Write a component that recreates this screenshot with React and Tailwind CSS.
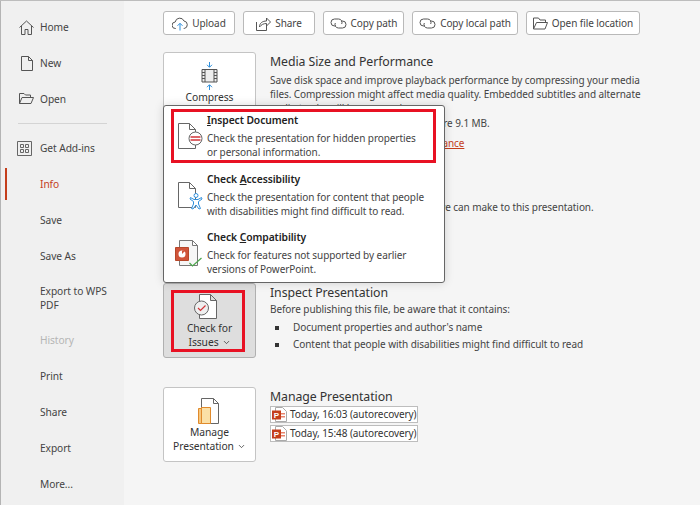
import { ChevronDown } from 'lucide-react';

const FONT = 'font-["Noto_Sans",sans-serif]';

function Glyph({ w = 18, h = 18, className = '', children }) {
  return (
    <svg width={w} height={h} viewBox={`0 0 ${w} ${h}`} fill="none" className={`shrink-0 ${className}`}>
      {children}
    </svg>
  );
}

const HomeIcon = () => (
  <Glyph w={15} h={15} className="ml-[2px]">
    <path d="M.5 7.5 7.5 1l7 6.5M2.5 6v8.5H6v-5h3v5h3.5V6" stroke="#555" />
  </Glyph>
);
const NewIcon = () => (
  <Glyph w={12} h={15} className="ml-[4px]">
    <path d="M.5.5h7l4 4v10H.5zM7.5.5v4h4" stroke="#555" />
  </Glyph>
);
const OpenIcon = () => (
  <Glyph w={15} h={11} className="ml-[2px] -mt-[2px]">
    <path d="M.5 10.5V.5H5L6.5 2h5v2.5M.5 10.5 3 4.5h11.5l-2.5 6z" stroke="#555" />
  </Glyph>
);
const AddinsIcon = () => (
  <Glyph w={15} h={15}>
    <path d="M.5.5h14v14H.5z" stroke="#666" />
    <path d="M3.5 3.5h3v3h-3zM8.5 3.5h3v3h-3zM3.5 8.5h3v3h-3zM8.5 8.5h3v3h-3z" stroke="#666" />
  </Glyph>
);

const UploadIcon = () => (
  <Glyph w={16} h={15}>
    <path d="M4 12.5h-.5A3.2 3.2 0 0 1 3.2 6 4.6 4.6 0 0 1 12 5a3.8 3.8 0 0 1 .2 7.5h-.5" stroke="#555" />
    <path d="M8 14.5V7.5M5.5 9.8 8 7.3l2.5 2.5" stroke="#2e8fdc" />
  </Glyph>
);
const ShareIcon = () => (
  <Glyph w={15} h={15}>
    <path d="M.5 6v8.5h10V10" stroke="#555" />
    <path d="M3.5 11c0-4 3-6 7-6V2l4 4-4 4V7.5c-3 0-5 1-7 3.5z" stroke="#555" />
  </Glyph>
);
const LinkIcon = () => (
  <Glyph w={17} h={13}>
    <path d="M6 9H4.5a3.5 3.5 0 0 1 0-7h4a3.5 3.5 0 0 1 3.2 5" stroke="#555" />
    <path d="M11 4h1.5a3.5 3.5 0 0 1 0 7h-4a3.5 3.5 0 0 1-3.2-5" stroke="#555" />
  </Glyph>
);
const FolderIcon = () => (
  <Glyph w={15} h={13}>
    <path d="M.5 12V1h5l1.5 2h5.5v2.5M.5 12l3-6.5h11L12 12z" stroke="#555" />
  </Glyph>
);

const CompressIcon = () => (
  <Glyph w={17} h={28}>
    <path d="M8.5 0v5M6 2.8l2.5 2.5L11 2.8M8.5 28v-5M6 25.2l2.5-2.5 2.5 2.5" stroke="#2e8fdc" />
    <path d="M1 7.5h15v12.5H1z" fill="#eee" stroke="#555" />
    <path d="M4 7.5V20M13 7.5V20M1 10.5h3M1 13.5h3M1 16.5h3M13 10.5h3M13 13.5h3M13 16.5h3" stroke="#555" />
  </Glyph>
);

const PageShape = () => (
  <path d="M.5.5h11l6 6v19H.5zM11.5.5v6h6" fill="#fff" stroke="#666" />
);
const InspectDocIcon = () => (
  <Glyph w={26} h={26}>
    <PageShape />
    <circle cx="17.5" cy="15.5" r="6.5" fill="#fff" stroke="#666" />
    <path d="M12.5 14h10M12.5 17h10" stroke="#d13438" strokeWidth="1.5" />
  </Glyph>
);
const AccessIcon = () => (
  <Glyph w={26} h={28}>
    <PageShape />
    <circle cx="18" cy="13.5" r="2" fill="#fff" stroke="#2e8fdc" />
    <path d="M12.5 15.5l3.5 2h4l3.5-2 .5 1.5-3.5 2.5v2.5l2 4.5-1.5.5-3-4-3 4-1.5-.5 2-4.5v-2.5L12 17z" fill="#fff" stroke="#2e8fdc" />
  </Glyph>
);
const CompatIcon = () => (
  <Glyph w={28} h={28} className="-ml-[3px]">
    <path d="M4.5.5h13l5 5v20h-18zM17.5.5v5h5" fill="#f6f6f6" stroke="#777" />
    <path d="M.5 7.5h13v13H.5z" fill="#d0543a" stroke="#b7472a" />
    <circle cx="7" cy="14" r="3.5" fill="#fff" />
    <path d="M7 14v-3.5h3.5z" fill="#d0543a" />
    <path d="M14.5 23l3 3 9-8" stroke="#4ca64c" strokeWidth="1.2" />
  </Glyph>
);
const CheckIssuesIcon = () => (
  <Glyph w={23} h={25} className="-ml-[8px]">
    <path d="M5.5.5h11l6 6v18h-17zM16.5.5v6h6" fill="#fff" stroke="#666" />
    <circle cx="7.5" cy="14" r="7" fill="#efefef" stroke="#666" />
    <path d="M4 14l2.5 2.5 5-5" stroke="#d13438" strokeWidth="1.2" />
  </Glyph>
);
const ManageIcon = () => (
  <Glyph w={21} h={26} className="-ml-[3px]">
    <path d="M3.5.5h12l5 5v20h-17zM15.5.5v5h5" fill="#fff" stroke="#666" />
    <path d="M.5 10.5h9v15h-9z" fill="#f6c77e" stroke="#e08a2c" />
    <path d="M3.5 9.5h9v16h-9z" fill="#fbe0a6" stroke="#e08a2c" />
  </Glyph>
);
const PptIcon = () => (
  <Glyph w={15} h={15}>
    <path d="M3.5.5h7l4 4v10h-11z" fill="#fff" stroke="#aaa" />
    <path d="M9 6h4v1.5H9zM9 9h4v1.5H9z" fill="#e7846d" />
    <path d="M0 3.5h9v9H0z" fill="#c43e1c" />
    <text x="4.5" y="11" textAnchor="middle" fontSize="8" fontWeight="700" fill="#fff" fontFamily="Liberation Sans">P</text>
  </Glyph>
);

function NavRow({ icon, active, muted, tall, children }) {
  return (
    <div className={`ml-[4px] my-[2px] flex items-center border-l-2 pl-[10px] ${tall ? 'h-[44px]' : 'h-[32px]'} ${active ? 'border-[#c43e1c] text-[#c43e1c]' : 'border-transparent'} ${muted ? 'text-[#b5b5b5]' : ''} ${!active && !muted ? 'text-[#444]' : ''}`}>
      <span className="flex w-[23px] shrink-0 items-center">{icon}</span>
      <span className="w-[80px] leading-[14px]">{children}</span>
    </div>
  );
}

function Sidebar() {
  return (
    <aside className="flex w-[124px] shrink-0 flex-col border-l border-[#b4b4b4] bg-[#f0f0f0] pt-[8px] text-[10.2px]">
      <NavRow icon={<HomeIcon />}>Home</NavRow>
      <NavRow icon={<NewIcon />}>New</NavRow>
      <NavRow icon={<OpenIcon />}>Open</NavRow>
      <div className="mx-[17px] my-[6px] h-px bg-[#d4d4d4]" />
      <NavRow icon={<AddinsIcon />}>Get Add-ins</NavRow>
      <NavRow active>Info</NavRow>
      <NavRow>Save</NavRow>
      <NavRow>Save As</NavRow>
      <NavRow tall>Export to WPS PDF</NavRow>
      <NavRow muted>History</NavRow>
      <NavRow>Print</NavRow>
      <NavRow>Share</NavRow>
      <NavRow>Export</NavRow>
      <NavRow>More...</NavRow>
    </aside>
  );
}

function ToolButton({ icon, width, children }) {
  return (
    <button className={`flex h-[24px] items-center justify-center gap-[4px] rounded-[3px] border border-[#b9b9b9] bg-white text-[10px] text-[#444] ${width}`}>
      {icon}
      <span className="whitespace-nowrap">{children}</span>
    </button>
  );
}

function Card({ icon, lines, chevron, selected }) {
  return (
    <div className={`flex h-[75px] w-[93px] shrink-0 flex-col items-center rounded-[3px] border pt-[9px] text-[10.3px] leading-[14px] ${selected ? 'border-[#b0b0b0] bg-[#dedede]' : 'border-[#c4c4c4] bg-white'} text-[#333]`}>
      <div className="mb-px flex h-[27px] items-center">{icon}</div>
      {lines.map((line, i) => (
        <div key={line} className="flex items-center gap-[3px]">
          {line}
          {chevron && i === lines.length - 1 && <ChevronDown size={9} strokeWidth={2} />}
        </div>
      ))}
    </div>
  );
}

function MenuItem({ icon, title, accel, rest, lines }) {
  return (
    <div className="flex h-[58.5px] pl-[14px] pt-[7px]">
      <div className="w-[29px] shrink-0 pt-[10px]">{icon}</div>
      <div className="whitespace-nowrap text-[10px] leading-[14px] text-[#444]">
        <div className="mb-[3px] text-[10.3px] font-semibold leading-[15px] text-[#222]">
          {title}<u>{accel}</u>{rest}
        </div>
        {lines.map((line) => <div key={line}>{line}</div>)}
      </div>
    </div>
  );
}

function InspectMenu() {
  return (
    <div className="absolute left-[163px] top-[104px] h-[178px] w-[282px] rounded-[3px] border border-[#666] bg-white shadow-[0_0_10px_rgba(0,0,0,0.15)]">
      <MenuItem
        icon={<InspectDocIcon />}
        title=""
        accel="I"
        rest="nspect Document"
        lines={['Check the presentation for hidden properties', 'or personal information.']}
      />
      <MenuItem
        icon={<AccessIcon />}
        title="Check "
        accel="A"
        rest="ccessibility"
        lines={['Check the presentation for content that people', 'with disabilities might find difficult to read.']}
      />
      <MenuItem
        icon={<CompatIcon />}
        title="Check "
        accel="C"
        rest="ompatibility"
        lines={['Check for features not supported by earlier', 'versions of PowerPoint.']}
      />
    </div>
  );
}

function Heading({ children }) {
  return <h2 className="pt-px text-[12.3px] leading-[17px] text-[#333]">{children}</h2>;
}

function Bullet({ children }) {
  return (
    <li className="flex items-center whitespace-nowrap">
      <span className="ml-[5px] mr-[14px] h-[4px] w-[4px] shrink-0 bg-[#333]" />
      {children}
    </li>
  );
}

function RecoveryLink({ children }) {
  return (
    <div className="flex h-[17px] w-[148px] items-center gap-[3px] whitespace-nowrap border border-[#bdbdbd] bg-white px-px text-[10px] text-[#333]">
      <PptIcon />
      <span>{children}</span>
    </div>
  );
}

export default function App() {
  return (
    <div className={`relative flex h-[505px] w-[700px] overflow-hidden border-t border-[#bdbdbd] bg-[#f5f5f5] tracking-[-0.07px] ${FONT}`}>
      <Sidebar />
      <main className="flex-1 pl-[39px] pt-[10px]">
        <div className="flex gap-[8px]">
          <ToolButton icon={<UploadIcon />} width="w-[72px]">Upload</ToolButton>
          <ToolButton icon={<ShareIcon />} width="w-[72px]">Share</ToolButton>
          <ToolButton icon={<LinkIcon />} width="w-[81px]">Copy path</ToolButton>
          <ToolButton icon={<LinkIcon />} width="w-[106px]">Copy local path</ToolButton>
          <ToolButton icon={<FolderIcon />} width="w-[114px]">Open file location</ToolButton>
        </div>

        <section className="mt-[17px] flex h-[112px] gap-[14px]">
          <Card icon={<CompressIcon />} lines={['Compress', 'Media']} />
          <div className="text-[10px] leading-[14px] text-[#444]">
            <Heading>Media Size and Performance</Heading>
            <p className="mt-[3px] w-[380px]">
              Save disk space and improve playback performance by compressing your media files. Compression might affect media quality. Embedded subtitles and alternate audio tracks will be removed.
            </p>
            <ul className="mt-px">
              <Bullet>Media files in this presentation are 9.1 MB.</Bullet>
            </ul>
            <p className="mt-[6px] text-[#c43e1c] underline">Learn more about media file performance</p>
          </div>
        </section>

        <section className="flex h-[119px] gap-[14px]">
          <div className="w-[93px] shrink-0" />
          <div className="pt-[16px] text-[10px] leading-[14px] text-[#444]">
            <Heading>Optimize Compatibility</Heading>
            <ul className="mt-[2px]">
              <Bullet>There are several changes that we can make to this presentation.</Bullet>
            </ul>
          </div>
        </section>

        <section className="flex h-[104px] gap-[14px]">
          <Card icon={<CheckIssuesIcon />} lines={['Check for', 'Issues']} chevron selected />
          <div className="text-[10px] text-[#444]">
            <Heading>Inspect Presentation</Heading>
            <p className="mt-px leading-[15px]">Before publishing this file, be aware that it contains:</p>
            <ul className="mt-[2px] leading-[17px]">
              <Bullet>Document properties and author's name</Bullet>
              <Bullet>Content that people with disabilities might find difficult to read</Bullet>
            </ul>
          </div>
        </section>

        <section className="flex gap-[14px]">
          <Card icon={<ManageIcon />} lines={['Manage', 'Presentation']} chevron />
          <div>
            <Heading>Manage Presentation</Heading>
            <div className="mt-px flex flex-col gap-[2px]">
              <RecoveryLink>Today, 16:03 (autorecovery)</RecoveryLink>
              <RecoveryLink>Today, 15:48 (autorecovery)</RecoveryLink>
            </div>
          </div>
        </section>
      </main>

      <InspectMenu />
      <div className="absolute left-[171px] top-[108px] h-[54px] w-[265px] border-[3px] border-[#e81123]" />
      <div className="absolute left-[171px] top-[289px] h-[62px] w-[74px] border-[3px] border-[#e81123]" />
    </div>
  );
}
